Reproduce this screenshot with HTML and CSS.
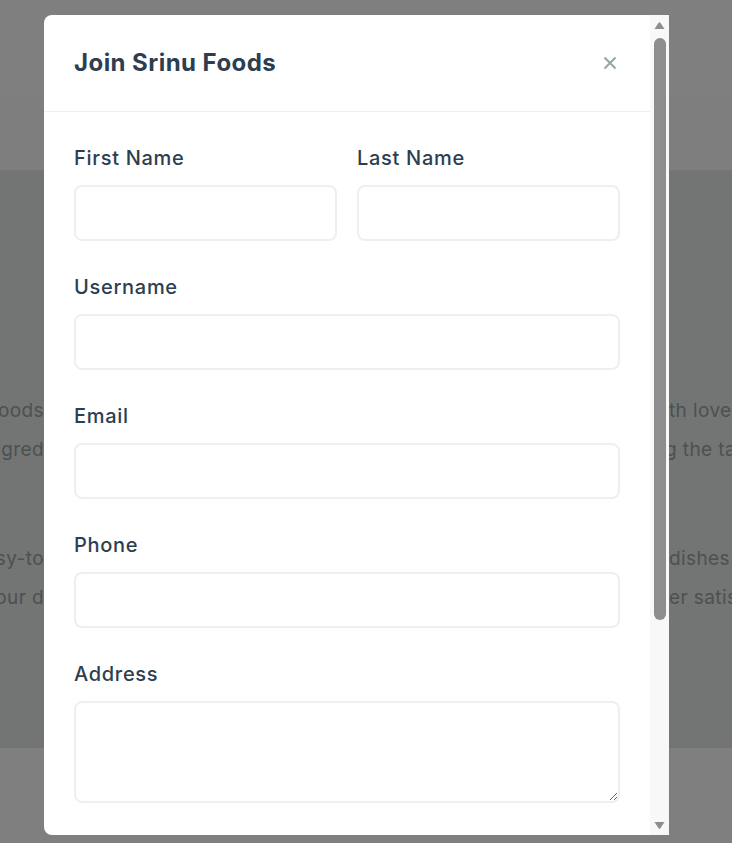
FILE: index.html
```html
<!DOCTYPE html>
<html lang="en">
<head>
<meta charset="utf-8">
<title>Join Srinu Foods</title>
<link rel="stylesheet" href="styles.css">
</head>
<body>
<div class="page">
  <header class="site-header"></header>
  <div class="sub-band"></div>
  <section class="about">
    <p class="para">
      <span class="line"><span class="edge-l">Welcome to Srinu Foods</span><span class="mid">, a home kitchen where every dish is made wi</span><span class="edge-r">th love and care.</span></span>
      <span class="line"><span class="edge-l">We use only the freshest ingred</span><span class="mid">ients, hand-picked spices and old recipes, brin</span><span class="edge-r r2">g the taste of home to you.</span></span>
    </p>
    <p class="para">
      <span class="line"><span class="edge-l">Browse our easy-to</span><span class="mid">-order menu, from breakfast classics to festive </span><span class="edge-r">dishes made fresh daily.</span></span>
      <span class="line"><span class="edge-l">Delivered hot to your d</span><span class="mid">oorstep, packed to keep the food fresh, leaving you forev</span><span class="edge-r">er satisfied.</span></span>
    </p>
  </section>
  <footer class="site-footer"></footer>
</div>

<div class="overlay">
  <div class="modal" role="dialog" aria-labelledby="modal-title">
    <div class="modal-content">
      <div class="modal-header">
        <h2 id="modal-title" class="modal-title">Join Srinu Foods</h2>
        <button class="close-btn" type="button" aria-label="Close">
          <svg width="14" height="14" viewBox="0 0 14 14" aria-hidden="true"><path d="M1.5 1.5 L12.5 12.5 M12.5 1.5 L1.5 12.5" stroke="#95a5a6" stroke-width="2" fill="none"/></svg>
        </button>
      </div>
      <form class="modal-body">
        <div class="row">
          <div class="form-group">
            <label for="first">First Name</label>
            <input id="first" type="text">
          </div>
          <div class="form-group">
            <label for="last">Last Name</label>
            <input id="last" type="text">
          </div>
        </div>
        <div class="form-group">
          <label for="username">Username</label>
          <input id="username" type="text">
        </div>
        <div class="form-group">
          <label for="email">Email</label>
          <input id="email" type="email">
        </div>
        <div class="form-group">
          <label for="phone">Phone</label>
          <input id="phone" type="tel">
        </div>
        <div class="form-group">
          <label for="address">Address</label>
          <textarea id="address"></textarea>
        </div>
      </form>
    </div>
    <div class="scrollbar" aria-hidden="true">
      <svg class="arrow" width="11" height="7" viewBox="0 0 11 7"><path d="M0.5 7 L4.6 0.8 Q5.5 -0.3 6.4 0.8 L10.5 7 Z" fill="#8d8d8d"/></svg>
      <div class="thumb"></div>
      <div class="track-rest"></div>
      <svg class="arrow" width="11" height="7" viewBox="0 0 11 7"><path d="M0.5 0 L4.6 6.2 Q5.5 7.3 6.4 6.2 L10.5 0 Z" fill="#8d8d8d"/></svg>
    </div>
  </div>
</div>
</body>
</html>
```

FILE: styles.css
```css
* { box-sizing: border-box; }

html, body {
  margin: 0;
  padding: 0;
}

body {
  font-family: Inter, "Liberation Sans", sans-serif;
  color: #2c3e50;
  background: #ffffff;
  overflow: hidden;
}

/* ---------- background page ---------- */
.page {
  width: 100%;
  overflow: hidden;
}

.site-header {
  height: 95px;
  background: #ffffff;
  box-shadow: 0 1px 3px rgba(0, 0, 0, 0.04);
}

.sub-band {
  height: 75px;
  background: #fcfcfc;
}

.about {
  background: #e6eae8;
  padding: 221px 0 131px;
  color: #98a2a3;
  font-size: 19px;
  letter-spacing: 0.4px;
  line-height: 39px;
}

.para {
  margin: 0 0 70px;
}
.para:last-child { margin-bottom: 0; }

.line {
  display: flex;
  white-space: nowrap;
}

.edge-l {
  flex: 0 0 44px;
  min-width: 0;
  display: flex;
  justify-content: flex-end;
  margin-right: -4px;
}

.mid {
  flex: 0 0 629px;
  min-width: 0;
  padding-left: 8px;
  overflow: hidden;
}

.edge-r {
  flex: none;
}

.edge-r.r2 {
  margin-left: -4px;
}

.site-footer {
  height: 95px;
  background: #ffffff;
}

/* ---------- modal ---------- */
.overlay {
  position: fixed;
  inset: 0;
  z-index: 10;
  background: rgba(0, 0, 0, 0.5);
  padding: 15px 0 0 44px;
}

.modal {
  width: 625px;
  height: 820px;
  display: flex;
  background: #ffffff;
  border-radius: 8px 0 0 8px;
  overflow: hidden;
}

.modal-content {
  flex: 1;
  min-width: 0;
  overflow: hidden;
}

.modal-header {
  display: flex;
  align-items: center;
  justify-content: space-between;
  padding: 30px 33px 30px 30px;
  border-bottom: 1px solid #ecf0f1;
}

.modal-title {
  margin: 0;
  font-size: 24px;
  line-height: 36px;
  font-weight: 700;
  letter-spacing: 0.45px;
  color: #2c3e50;
}

.close-btn {
  border: 0;
  background: none;
  padding: 0;
  width: 14px;
  height: 14px;
  display: flex;
  cursor: pointer;
}

.modal-body {
  display: block;
  padding: 30px 30px 0;
}

.row {
  display: grid;
  grid-template-columns: 1fr 1fr;
  gap: 20px;
}

.form-group {
  margin-bottom: 30px;
}

.form-group label {
  display: block;
  font-size: 20px;
  line-height: 32px;
  font-weight: 500;
  letter-spacing: 0.7px;
  margin-bottom: 11px;
  color: #2c3e50;
}

.form-group input,
.form-group textarea {
  display: block;
  width: 100%;
  height: 56px;
  border: 2px solid #ecf0f1;
  border-radius: 8px;
  background: #ffffff;
  font-family: inherit;
  font-size: 16px;
  padding: 12px 16px;
  color: #2c3e50;
  outline: none;
}

.form-group textarea {
  height: 102px;
  resize: vertical;
}

/* drawn scrollbar of the scrolling dialog */
.scrollbar {
  flex: 0 0 19px;
  display: flex;
  flex-direction: column;
  align-items: center;
  padding: 7px 0 6px;
  background: #f8f8f8;
}

.arrow {
  display: block;
  flex: none;
}

.thumb {
  flex: none;
  width: 12px;
  height: 582px;
  margin-top: 9px;
  border-radius: 6px;
  background: #8d8d8d;
}

.track-rest {
  flex: 1;
}
```
